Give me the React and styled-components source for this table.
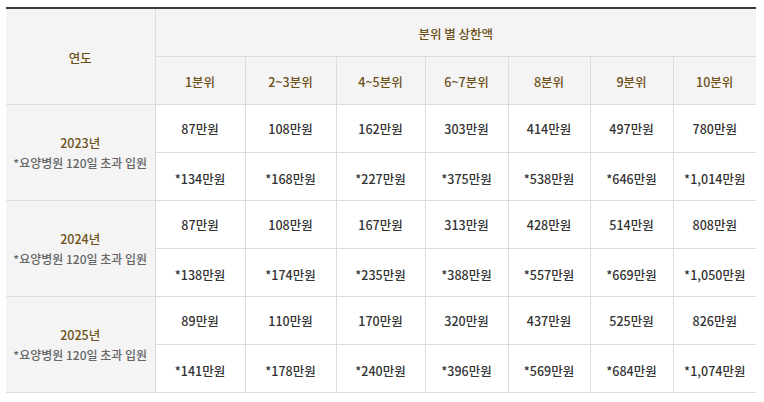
import React from "react";
import styled, { createGlobalStyle } from "styled-components";

//Global
const GlobalStyle = createGlobalStyle`
  html, body {
    margin: 0;
    padding: 0;
    background: #fff;
  }
  body {
    padding: 7px 8px 0 6px;
    font-family: "Noto Sans CJK KR", "Noto Sans", sans-serif;
  }
`;

//Data
const quantiles = ["1분위", "2~3분위", "4~5분위", "6~7분위", "8분위", "9분위", "10분위"];

const years = [
  {
    year: "2023년",
    normal: ["87", "108", "162", "303", "414", "497", "780"],
    longStay: ["134", "168", "227", "375", "538", "646", "1,014"],
  },
  {
    year: "2024년",
    normal: ["87", "108", "167", "313", "428", "514", "808"],
    longStay: ["138", "174", "235", "388", "557", "669", "1,050"],
  },
  {
    year: "2025년",
    normal: ["89", "110", "170", "320", "437", "525", "826"],
    longStay: ["141", "178", "240", "396", "569", "684", "1,074"],
  },
];

const colWidths = [149, 90, 91, 89, 83, 82, 83, 83];

const App = () => {
  return (
    <>
      <GlobalStyle />
      <Table>
        <colgroup>
          {colWidths.map((w, i) => (
            <col key={i} style={{ width: w }} />
          ))}
        </colgroup>
        <thead>
          <tr>
            <Th rowSpan={2}>연도</Th>
            <Th colSpan={7}>분위 별 상한액</Th>
          </tr>
          <tr>
            {quantiles.map((q) => (
              <Th key={q}>{q}</Th>
            ))}
          </tr>
        </thead>
        <tbody>
          {years.map((y) => (
            <React.Fragment key={y.year}>
              <tr>
                <YearCell rowSpan={2}>
                  <YearLabel>{y.year}</YearLabel>
                  <Note>*요양병원 120일 초과 입원</Note>
                </YearCell>
                {y.normal.map((v, i) => (
                  <Td key={i}>{v}만원</Td>
                ))}
              </tr>
              <tr>
                {y.longStay.map((v, i) => (
                  <Td key={i} $lower>
                    *{v}만원
                  </Td>
                ))}
              </tr>
            </React.Fragment>
          ))}
        </tbody>
      </Table>
    </>
  );
};

const Table = styled.table`
  width: 750px;
  table-layout: fixed;
  border-collapse: collapse;
  border-top: 2px solid #3a3a3a;
  font-size: 12.5px;
  font-weight: 500;
  text-align: center;
`;

const Th = styled.th`
  height: 47px;
  padding: 2px 0 0;
  background: #f4f4f4;
  border: 1px solid #dcdcdc;
  border-top: none;
  color: #6e5019;
  font-weight: 500;
  &:first-child {
    border-left: none;
  }
  &:last-child {
    border-right: none;
  }
  tr:first-child > & {
    height: 45px;
  }
  tr:nth-child(2) > & {
    height: 45px;
  }
`;

const YearCell = styled.td`
  padding: 0;
  background: #f4f4f4;
  border: 1px solid #dcdcdc;
  border-left: none;
  line-height: 20px;
`;

const YearLabel = styled.div`
  color: #6e5019;
  font-size: 12.5px;
`;

const Note = styled.div`
  color: #666;
  font-size: 12px;
`;

const Td = styled.td`
  height: ${(p) => (p.$lower ? "43px" : "47px")};
  padding: ${(p) => (p.$lower ? "4px 0 0" : "0")};
  border: 1px solid #dcdcdc;
  color: #333;
  &:last-child {
    border-right: none;
  }
`;

export default App;
